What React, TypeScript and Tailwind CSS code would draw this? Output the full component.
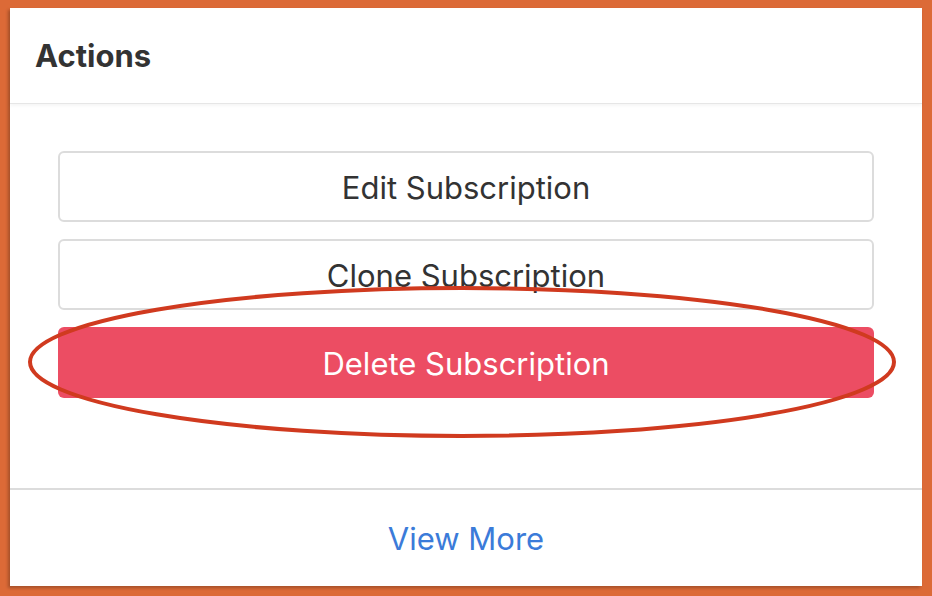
export default function App() {
  return (
    <div className="w-[932px] h-[596px] bg-[#dc6a37] pt-[8px] pl-[10px] pr-[10px] pb-[10px] font-['Inter','Liberation_Sans',Arial,sans-serif]">
      <div className="w-[912px] h-[578px] bg-white flex flex-col shadow-[-2px_2px_3px_rgba(0,0,0,0.25)]">
        {/* Header */}
        <div className="h-[96px] flex items-center pl-[25px] border-b border-[#e6e6e6] shadow-[0_2px_3px_rgba(0,0,0,0.04)]">
          <h2 className="text-[31px] font-bold text-[#333] pt-[2px]">Actions</h2>
        </div>

        {/* Body */}
        <div className="relative flex-1 flex flex-col gap-[17px] px-[48px] pt-[47px]">
          <button className="h-[71px] w-full rounded-[6px] border-2 border-[#dcdcdc] bg-white text-[31px] text-[#333] pt-[4px]">
            Edit Subscription
          </button>
          <button className="h-[71px] w-full rounded-[6px] border-2 border-[#dcdcdc] bg-white text-[31px] text-[#333] pt-[4px]">
            Clone Subscription
          </button>
          <button className="h-[71px] w-full rounded-[6px] bg-[#ec4d63] text-[31px] text-white pt-[4px]">
            Delete Subscription
          </button>

          {/* hand-drawn highlight */}
          <svg className="absolute left-[16px] top-[182px] pointer-events-none" width="874" height="156" viewBox="0 0 874 156">
            <ellipse cx="436" cy="76" rx="432" ry="74" fill="none" stroke="#d03a1f" strokeWidth="4" />
          </svg>
        </div>

        {/* Footer */}
        <div className="h-[98px] border-t-2 border-[#dcdcdc] flex items-center justify-center">
          <a className="text-[31px] text-[#3b7bd9] cursor-pointer pt-[2px]">View More</a>
        </div>
      </div>
    </div>
  );
}
